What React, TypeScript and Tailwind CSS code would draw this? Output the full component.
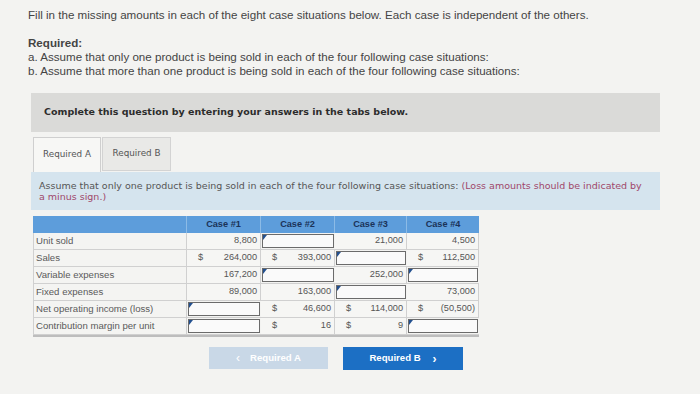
import React from "react";

type Cell =
  | { kind: "val"; v: string; dollar?: boolean }
  | { kind: "input" };

const rows: { label: string; cells: Cell[] }[] = [
  {
    label: "Unit sold",
    cells: [
      { kind: "val", v: "8,800" },
      { kind: "input" },
      { kind: "val", v: "21,000" },
      { kind: "val", v: "4,500" },
    ],
  },
  {
    label: "Sales",
    cells: [
      { kind: "val", v: "264,000", dollar: true },
      { kind: "val", v: "393,000", dollar: true },
      { kind: "input" },
      { kind: "val", v: "112,500", dollar: true },
    ],
  },
  {
    label: "Variable expenses",
    cells: [
      { kind: "val", v: "167,200" },
      { kind: "input" },
      { kind: "val", v: "252,000" },
      { kind: "input" },
    ],
  },
  {
    label: "Fixed expenses",
    cells: [
      { kind: "val", v: "89,000" },
      { kind: "val", v: "163,000" },
      { kind: "input" },
      { kind: "val", v: "73,000" },
    ],
  },
  {
    label: "Net operating income (loss)",
    cells: [
      { kind: "input" },
      { kind: "val", v: "46,600", dollar: true },
      { kind: "val", v: "114,000", dollar: true },
      { kind: "val", v: "(50,500)", dollar: true },
    ],
  },
  {
    label: "Contribution margin per unit",
    cells: [
      { kind: "input" },
      { kind: "val", v: "16", dollar: true },
      { kind: "val", v: "9", dollar: true },
      { kind: "input" },
    ],
  },
];

const colW = ["w-[74px]", "w-[74px]", "w-[72px]", "w-[72px]"];

function CaseCell({ cell, w }: { cell: Cell; w: string }) {
  if (cell.kind === "input") {
    return (
      <div className={`${w} h-[17px] p-[1px] border-b border-[#d0d0d0]`}>
        <div className="relative h-full border border-[#6b6b6b] bg-[#fafafa]">
          <span className="absolute top-0 left-0 w-0 h-0 border-t-[5px] border-r-[4px] border-t-[#23508f] border-r-transparent" />
        </div>
      </div>
    );
  }
  return (
    <div
      className={`${w} h-[17px] flex items-center justify-between pl-[11px] pr-[3px] border-b border-r border-[#d0d0d0] bg-[#f6f6f4] text-[#555]`}
    >
      <span>{cell.dollar ? "$" : ""}</span>
      <span>{cell.v}</span>
    </div>
  );
}

const verdana = { fontFamily: '"DejaVu Sans", Verdana, sans-serif' };

export default function App() {
  return (
    <div
      className="w-[700px] h-[394px] overflow-hidden bg-[#f3f3f1] text-[#3b3b3b]"
      style={{ fontFamily: '"Liberation Sans", Arial, sans-serif' }}
    >
      {/* intro text */}
      <div className="pl-[28px] pt-[8px] text-[11.6px] leading-[14px] text-[#444]">
        <p>
          Fill in the missing amounts in each of the eight case situations below. Each case is
          independent of the others.
        </p>
        <p className="mt-[14px] font-bold">Required:</p>
        <p>a. Assume that only one product is being sold in each of the four following case situations:</p>
        <p>b. Assume that more than one product is being sold in each of the four following case situations:</p>
      </div>

      <div className="ml-[31px] w-[629px]">
        {/* instruction bar */}
        <div
          className="mt-[15px] h-[39px] bg-[#dadad8] flex items-center pl-[13px] text-[9.5px] font-bold text-[#2c2c2c]"
          style={verdana}
        >
          Complete this question by entering your answers in the tabs below.
        </div>

        {/* tabs */}
        <div className="ml-[2px] mt-[5px] flex gap-[1px] text-[8.8px] text-[#555]" style={verdana}>
          <div className="w-[68px] h-[35px] flex items-center justify-center border border-b-0 border-[#cfcfcf] bg-[#f7f7f5]">
            Required A
          </div>
          <div className="w-[69px] h-[34px] flex items-center justify-center border border-[#d3d3d3] bg-[#e9e9e7]">
            Required B
          </div>
        </div>

        {/* instructions for part A */}
        <div
          className="h-[38px] bg-[#d5e4ee] pl-[8px] pt-[8px] text-[9.5px] leading-[11px] text-[#555]"
          style={verdana}
        >
          Assume that only one product is being sold in each of the four following case situations:{" "}
          <span className="text-[#a0476a]">
            (Loss amounts should be indicated by
            <br />a minus sign.)
          </span>
        </div>
      </div>

      {/* data table */}
      <div className="ml-[33px] mt-[6px] w-[446px] text-[9.2px] border-b-2 border-[#bdbdbd]">
        <div className="flex h-[17px] bg-[#5d9ddb] text-[#1b3358] font-bold">
          <div className="w-[154px] border-r border-[#8cbbe6]" />
          {["Case #1", "Case #2", "Case #3", "Case #4"].map((c, i) => (
            <div
              key={c}
              className={`${colW[i]} flex items-center justify-center ${i < 3 ? "border-r border-[#8cbbe6]" : ""}`}
            >
              {c}
            </div>
          ))}
        </div>
        {rows.map((r) => (
          <div key={r.label} className="flex">
            <div className="w-[154px] h-[17px] flex items-center pl-[2px] border-b border-r border-l border-[#d0d0d0] bg-[#f4f4f2] text-[9.6px] text-[#5a5a5a]">
              {r.label}
            </div>
            {r.cells.map((c, i) => (
              <CaseCell key={i} cell={c} w={colW[i]} />
            ))}
          </div>
        ))}
      </div>

      {/* navigation buttons */}
      <div className="pl-[209px] mt-[10px] flex gap-[15px] text-[9.6px] font-bold text-white">
        <div className="w-[119px] h-[22px] flex items-center justify-center gap-[10px] bg-[#c9d8e7]">
          <span className="text-[12px] font-normal">‹</span>
          <span>Required A</span>
        </div>
        <div className="w-[120px] h-[23px] flex items-center justify-center gap-[12px] bg-[#1c6fc4]">
          <span>Required B</span>
          <span className="text-[12px]">›</span>
        </div>
      </div>
    </div>
  );
}
